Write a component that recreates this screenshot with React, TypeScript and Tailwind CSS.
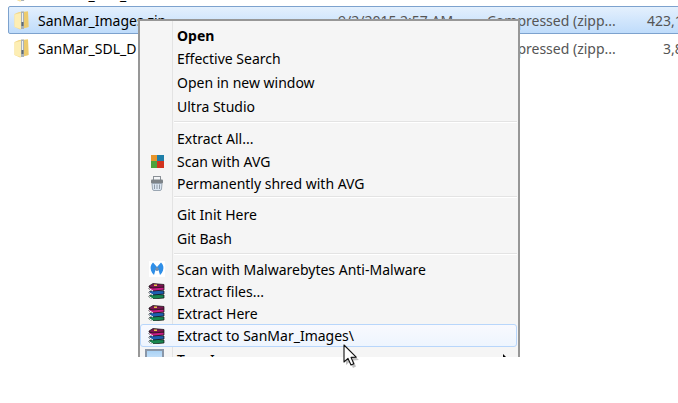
function ZipFolder() {
  return (
    <svg width="15" height="19" viewBox="0 0 15 19" className="shrink-0">
      <path d="M0.5 3 L5 1 L14 0.5 L14.5 16 L6 18.5 L0.5 16 Z" fill="#f3d98a" />
      <path d="M0.5 3.5 L7 2 L7 18 L0.5 16 Z" fill="#fdeeb4" />
      <path d="M10 1 L14 0.5 L14.5 16 L10 17 Z" fill="#eccb6e" />
      <rect x="7" y="0.5" width="3" height="17.5" fill="#aab2b8" />
      <rect x="8" y="2" width="1" height="9" fill="#eef1f3" />
      <rect x="7.5" y="11" width="2" height="4" fill="#5f6a72" />
    </svg>
  )
}

function Rar() {
  return (
    <svg width="17" height="16" viewBox="0 0 17 16" className="-ml-[2px] shrink-0">
      <path d="M1 13 L5 11 L16 12 L16 15 L5 16 L1 14 Z" fill="#17864f" stroke="#111" strokeWidth="0.7" />
      <path d="M1 9 L5 7 L16 8 L16 11 L5 12 L1 10 Z" fill="#1c5fb0" stroke="#111" strokeWidth="0.7" />
      <path d="M1 5 L5 3 L16 4 L16 7 L5 8 L1 6 Z" fill="#c81c85" stroke="#111" strokeWidth="0.7" />
      <path d="M1 3 L5 0.5 L16 1.5 L16 4 L5 5 L1 4 Z" fill="#7a1550" stroke="#111" strokeWidth="0.7" />
      <path d="M1 5.5 L5 8 M1 9.5 L5 12 M1 13.5 L5 16" stroke="#fff" strokeWidth="1" />
      <rect x="6" y="1.5" width="3" height="1.5" fill="#e8c84a" />
    </svg>
  )
}

function Avg() {
  return (
    <svg width="13" height="13" viewBox="0 0 13 13" className="shrink-0">
      <rect width="7" height="7" fill="#e8962c" />
      <rect x="6" width="7" height="7" fill="#1f7fa8" />
      <rect y="6" width="7" height="7" fill="#4ea23c" />
      <rect x="6" y="6" width="7" height="7" fill="#d2341f" />
    </svg>
  )
}

function Shredder() {
  return (
    <svg width="14" height="15" viewBox="0 0 14 15" className="shrink-0">
      <rect x="3.5" y="0.5" width="7" height="4" fill="#f4f6f8" stroke="#8a9096" />
      <rect x="1" y="3.5" width="12" height="4" rx="1" fill="#7d8388" />
      <path d="M2 7.5 H12 L11.5 13 Q11.3 14.5 10 14.5 H4 Q2.7 14.5 2.5 13 Z" fill="#dbe6f2" stroke="#9aa6b2" />
      <path d="M4.5 8.5 V13 M7 8.5 V13 M9.5 8.5 V13" stroke="#8f9aa6" />
    </svg>
  )
}

function Malwarebytes() {
  return (
    <svg width="16" height="16" viewBox="0 0 16 16" className="shrink-0">
      <rect width="16" height="16" fill="#fff" />
      <path d="M4 1.5 L8 6 L12 1.5 Q15.5 5 14 9.5 Q13 12.5 11 14 L9.5 9 L8 10 L6.5 9 L5 14 Q3 12.5 2 9.5 Q0.5 5 4 1.5 Z" fill="#2f8fe8" />
      <circle cx="8" cy="8" r="1.7" fill="#7b8fa6" />
    </svg>
  )
}

function Cursor() {
  return (
    <svg width="17" height="24" viewBox="0 0 17 24">
      <path d="M3 4 L3 21 L7 17.5 L10 24 L13 22.5 L10.5 16.5 L16 16 Z" fill="#000" fillOpacity="0.25" />
      <path d="M1 1 L1 18 L5 14.4 L8 21 L10.8 19.8 L8 13.4 L13.2 13.2 Z" fill="#fff" stroke="#111" strokeWidth="1.1" strokeLinejoin="round" />
    </svg>
  )
}

function Sep() {
  return <div className="ml-[33px] mr-[1px] h-[2px] border-t border-[#e3e3e3] bg-white" />
}

function Item({ h, icon, bold, text }: { h: string; icon?: React.ReactNode; bold?: boolean; text: string }) {
  return (
    <div className={`flex items-center ${h}`}>
      <div className="flex w-[32px] shrink-0 justify-center">{icon}</div>
      <span className={`pl-[4px] ${bold ? 'font-bold' : ''}`}>{text}</span>
    </div>
  )
}

function Row({ selected, name, nameClass, size, sizeClass, children }: { selected?: boolean; name: string; nameClass?: string; size?: string; sizeClass?: string; children?: React.ReactNode }) {
  return (
    <div
      className={`flex h-[28px] items-center rounded-[2px] border text-[#555] ${
        selected ? 'border-[#7da2ce] bg-gradient-to-b from-[#e4f0fd] to-[#bfdcfb]' : 'border-transparent'
      }`}
    >
      <div className="ml-[5px] w-[24px]">
        <ZipFolder />
      </div>
      <span className={`w-[300px] text-black ${nameClass}`}>{name}</span>
      {children}
      <span className={`whitespace-nowrap ${sizeClass}`}>{size}</span>
    </div>
  )
}

export default function App() {
  return (
    <div className="relative h-[403px] w-[678px] overflow-hidden bg-white font-['Noto_Sans',sans-serif] text-[14px] text-black">
      <div className="-mt-[22px] ml-[8px] w-[690px]">
        <Row name="SanMar_SDL_Data" nameClass="pt-[4px]" />
        <Row selected name="SanMar_Images.zip" size="423,1" sizeClass="">
          <span className="w-[149px]">9/2/2015 2:57 AM</span>
          <span className="w-[160px]">Compressed (zipp...</span>
        </Row>
        <Row name="SanMar_SDL_D" size="3,8" sizeClass="pl-[16px]">
          <span className="w-[149px]"></span>
          <span className="w-[160px]">Compressed (zipp...</span>
        </Row>
      </div>

      <div className="absolute left-[138px] top-[19px] h-[338px] w-[382px] overflow-hidden border-x-2 border-t-2 border-x-[#979797] border-t-[#979797] bg-[#f5f5f5] pt-[1px] pl-[1px]">
        <div className="absolute bottom-0 left-[32px] top-0 w-[1px] bg-[#e3e3e3]" />
        <div className="relative">
          <Item h="h-[24px] pt-[2px]" bold text="Open" />
          <Item h="h-[24px]" text="Effective Search" />
          <Item h="h-[24px]" text="Open in new window" />
          <Item h="h-[24px]" text="Ultra Studio" />
          <div className="h-[3px]" />
          <Sep />
          <div className="h-[3px]" />
          <Item h="h-[24px]" text="Extract All..." />
          <Item h="h-[22px]" icon={<Avg />} text="Scan with AVG" />
          <Item h="h-[22px]" icon={<Shredder />} text="Permanently shred with AVG" />
          <div className="h-[2px]" />
          <Sep />
          <div className="h-[4px]" />
          <Item h="h-[24px]" text="Git Init Here" />
          <Item h="h-[24px]" text="Git Bash" />
          <div className="h-[3px]" />
          <Sep />
          <div className="h-[3px]" />
          <Item h="h-[22px]" icon={<Malwarebytes />} text="Scan with Malwarebytes Anti-Malware" />
          <Item h="h-[22px]" icon={<Rar />} text="Extract files..." />
          <Item h="h-[22px]" icon={<Rar />} text="Extract Here" />
          <div className="-ml-[1px] mr-[1px] rounded-[3px] border border-[#b8d6fb] bg-gradient-to-b from-[#f8f9fe] to-[#eef5fe]">
            <Item h="h-[21px]" icon={<Rar />} text="Extract to SanMar_Images\" />
          </div>
          <div className="relative">
            <Item
              h="h-[24px]"
              icon={<div className="-ml-[5px] h-[20px] w-[19px] border-2 border-[#8a97a8] bg-gradient-to-b from-[#a9d2f5] to-[#e8f2fb]" />}
              text="True Image"
            />
            <div className="absolute right-[11px] top-[7px] h-0 w-0 border-y-[4px] border-l-[4px] border-y-transparent border-l-black" />
          </div>
        </div>
      </div>

      <div className="absolute left-[343px] top-[344px]">
        <Cursor />
      </div>
    </div>
  )
}
